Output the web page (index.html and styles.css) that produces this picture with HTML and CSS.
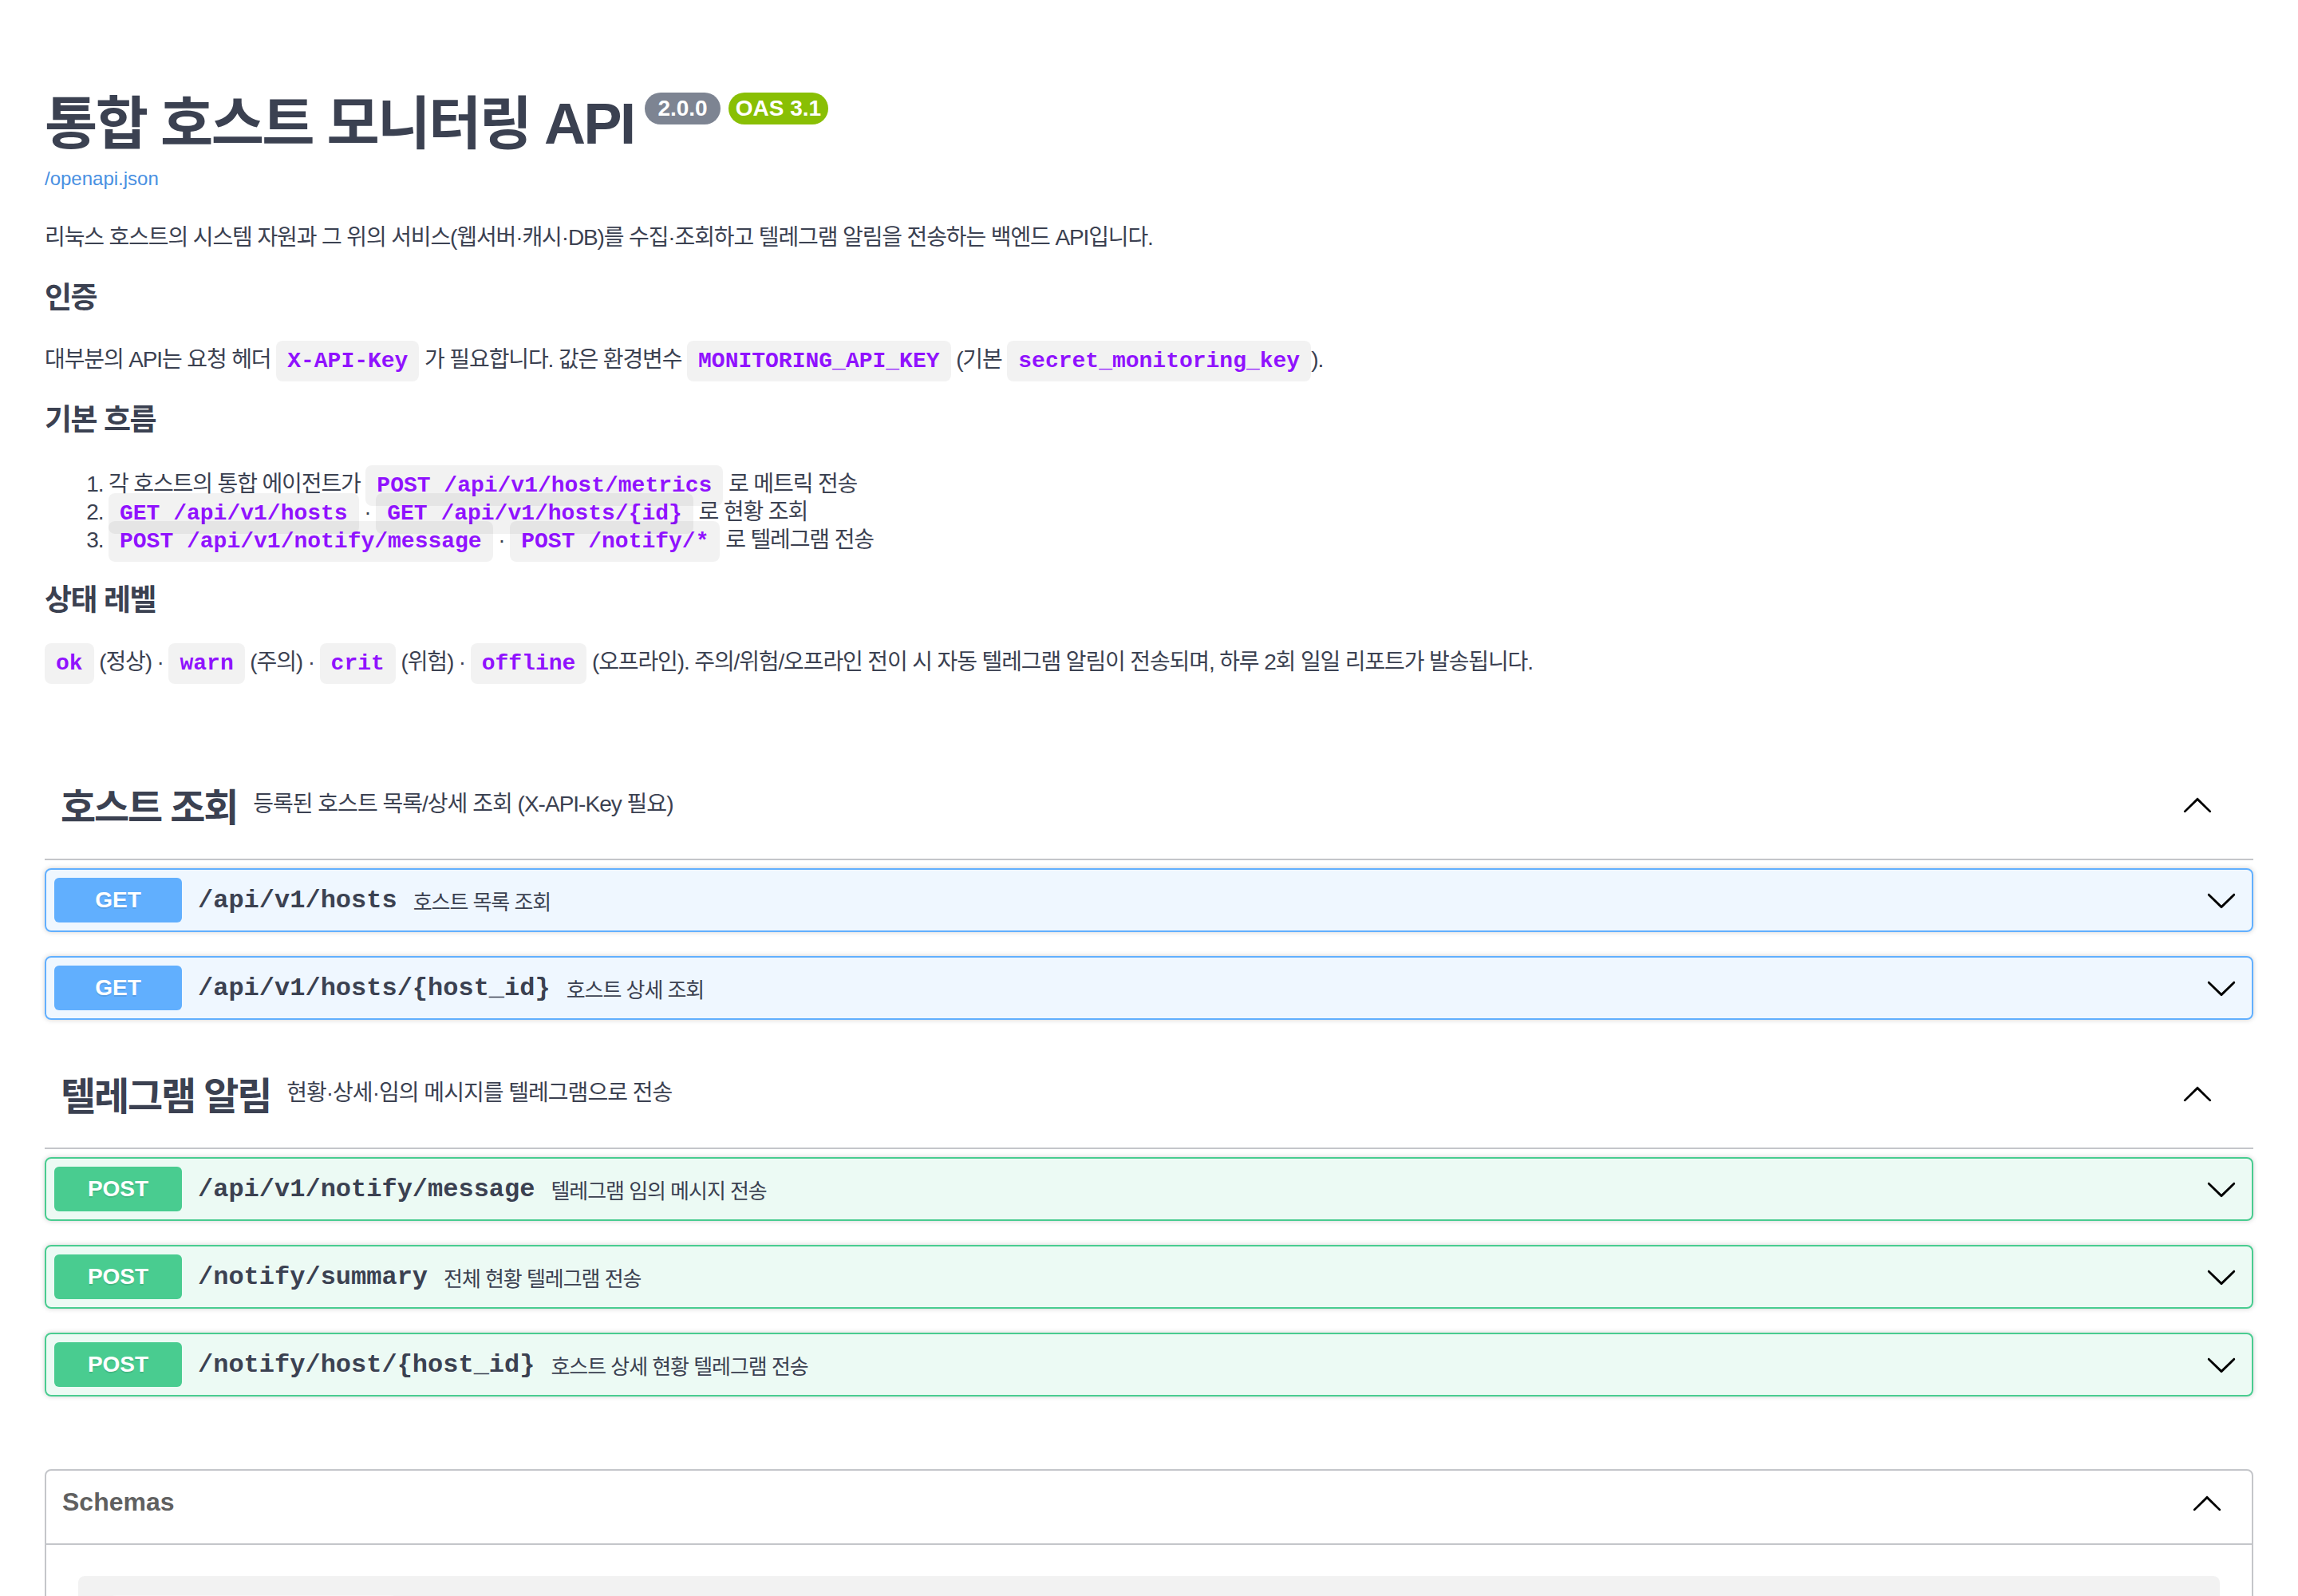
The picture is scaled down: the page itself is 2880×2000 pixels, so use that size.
FILE: index.html
```html
<!DOCTYPE html>
<html lang="ko">
<head>
    <meta charset="UTF-8">
    <meta name="viewport" content="width=device-width, initial-scale=1.0">
    <title>통합 호스트 모니터링 API - Swagger UI</title>
    <link rel="stylesheet" href="styles.css">
</head>
<body>
    <div class="wrapper">
        <div class="info">
            <hgroup class="main">
                <h2 class="title">통합 호스트 모니터링 API<span class="version">2.0.0</span><span class="version stamp">OAS 3.1</span></h2>
                <a class="link" href="#">/openapi.json</a>
            </hgroup>
            <div class="markdown">
                <p>리눅스 호스트의 시스템 자원과 그 위의 서비스(웹서버·캐시·DB)를 수집·조회하고 텔레그램 알림을 전송하는 백엔드 API입니다.</p>
                <h3>인증</h3>
                <p>대부분의 API는 요청 헤더 <code>X-API-Key</code> 가 필요합니다. 값은 환경변수 <code>MONITORING_API_KEY</code> (기본 <code>secret_monitoring_key</code>).</p>
                <h3>기본 흐름</h3>
                <ol>
                    <li>각 호스트의 통합 에이전트가 <code>POST /api/v1/host/metrics</code> 로 메트릭 전송</li>
                    <li><code>GET /api/v1/hosts</code> · <code>GET /api/v1/hosts/{id}</code> 로 현황 조회</li>
                    <li><code>POST /api/v1/notify/message</code> · <code>POST /notify/*</code> 로 텔레그램 전송</li>
                </ol>
                <h3>상태 레벨</h3>
                <p><code>ok</code> (정상) · <code>warn</code> (주의) · <code>crit</code> (위험) · <code>offline</code> (오프라인). 주의/위험/오프라인 전이 시 자동 텔레그램 알림이 전송되며, 하루 2회 일일 리포트가 발송됩니다.</p>
            </div>
        </div>

        <section class="tag-section">
            <h3 class="tag">
                <span class="tag-name">호스트 조회</span>
                <small><p>등록된 호스트 목록/상세 조회 (X-API-Key 필요)</p></small>
                <svg class="arrow" viewBox="0 0 20 20"><path d="M17.418 14.908c.272.268.709.268.979 0s.271-.701 0-.969l-7.908-7.83c-.27-.268-.707-.268-.979 0l-7.908 7.83c-.27.268-.27.701 0 .969.271.268.709.268.979 0L10 7.773l7.418 7.135z"/></svg>
            </h3>
            <div class="opblock get">
                <div class="summary">
                    <span class="method">GET</span>
                    <span class="path">/api/v1/hosts</span>
                    <span class="desc">호스트 목록 조회</span>
                    <svg class="arrow" viewBox="0 0 20 20"><path d="M17.418 6.109c.272-.268.709-.268.979 0s.271.701 0 .969l-7.908 7.83c-.27.268-.707.268-.979 0l-7.908-7.83c-.27-.268-.27-.701 0-.969.271-.268.709-.268.979 0L10 13.25l7.418-7.141z"/></svg>
                </div>
            </div>
            <div class="opblock get">
                <div class="summary">
                    <span class="method">GET</span>
                    <span class="path">/api/v1/hosts/{host_id}</span>
                    <span class="desc">호스트 상세 조회</span>
                    <svg class="arrow" viewBox="0 0 20 20"><path d="M17.418 6.109c.272-.268.709-.268.979 0s.271.701 0 .969l-7.908 7.83c-.27.268-.707.268-.979 0l-7.908-7.83c-.27-.268-.27-.701 0-.969.271-.268.709-.268.979 0L10 13.25l7.418-7.141z"/></svg>
                </div>
            </div>
        </section>

        <section class="tag-section">
            <h3 class="tag">
                <span class="tag-name">텔레그램 알림</span>
                <small><p>현황·상세·임의 메시지를 텔레그램으로 전송</p></small>
                <svg class="arrow" viewBox="0 0 20 20"><path d="M17.418 14.908c.272.268.709.268.979 0s.271-.701 0-.969l-7.908-7.83c-.27-.268-.707-.268-.979 0l-7.908 7.83c-.27.268-.27.701 0 .969.271.268.709.268.979 0L10 7.773l7.418 7.135z"/></svg>
            </h3>
            <div class="opblock post">
                <div class="summary">
                    <span class="method">POST</span>
                    <span class="path">/api/v1/notify/message</span>
                    <span class="desc">텔레그램 임의 메시지 전송</span>
                    <svg class="arrow" viewBox="0 0 20 20"><path d="M17.418 6.109c.272-.268.709-.268.979 0s.271.701 0 .969l-7.908 7.83c-.27.268-.707.268-.979 0l-7.908-7.83c-.27-.268-.27-.701 0-.969.271-.268.709-.268.979 0L10 13.25l7.418-7.141z"/></svg>
                </div>
            </div>
            <div class="opblock post">
                <div class="summary">
                    <span class="method">POST</span>
                    <span class="path">/notify/summary</span>
                    <span class="desc">전체 현황 텔레그램 전송</span>
                    <svg class="arrow" viewBox="0 0 20 20"><path d="M17.418 6.109c.272-.268.709-.268.979 0s.271.701 0 .969l-7.908 7.83c-.27.268-.707.268-.979 0l-7.908-7.83c-.27-.268-.27-.701 0-.969.271-.268.709-.268.979 0L10 13.25l7.418-7.141z"/></svg>
                </div>
            </div>
            <div class="opblock post">
                <div class="summary">
                    <span class="method">POST</span>
                    <span class="path">/notify/host/{host_id}</span>
                    <span class="desc">호스트 상세 현황 텔레그램 전송</span>
                    <svg class="arrow" viewBox="0 0 20 20"><path d="M17.418 6.109c.272-.268.709-.268.979 0s.271.701 0 .969l-7.908 7.83c-.27.268-.707.268-.979 0l-7.908-7.83c-.27-.268-.27-.701 0-.969.271-.268.709-.268.979 0L10 13.25l7.418-7.141z"/></svg>
                </div>
            </div>
        </section>

        <section class="models">
            <h4>
                <span>Schemas</span>
                <svg class="arrow" viewBox="0 0 20 20"><path d="M17.418 14.908c.272.268.709.268.979 0s.271-.701 0-.969l-7.908-7.83c-.27-.268-.707-.268-.979 0l-7.908 7.83c-.27.268-.27.701 0 .969.271.268.709.268.979 0L10 7.773l7.418 7.135z"/></svg>
            </h4>
            <div class="model-container">
                <div class="model-box"></div>
            </div>
        </section>
    </div>
</body>
</html>
```

FILE: styles.css
```css
body {
    margin: 0;
    background: #fff;
    color: #3b4151;
    font-family: "Liberation Sans", "Noto Sans CJK KR", sans-serif;
    font-feature-settings: "palt";
}
.wrapper {
    padding: 16px 56px 0;
}
.info {
    margin: 100px 0 94px;
}
.main {
    margin: 0;
}
.title {
    margin: 0;
    font-size: 72px;
    line-height: 78px;
    font-weight: 700;
    letter-spacing: -0.035em;
}
.version {
    display: inline-block;
    vertical-align: top;
    margin-left: 14px;
    padding: 4px 16px;
    border-radius: 40px;
    background: #7d8492;
    color: #fff;
    font-size: 28px;
    line-height: 32px;
    letter-spacing: 0;
}
.version.stamp {
    margin-left: 10px;
    padding: 4px 9px;
    background: #89bf04;
}
.link {
    display: block;
    margin-top: 15px;
    color: #4990e2;
    font-size: 24px;
    line-height: 30px;
    text-decoration: none;
}
.markdown {
    padding-top: 4px;
}
.markdown p, .markdown li {
    font-size: 28px;
    line-height: 35px;
    letter-spacing: -0.04em;
}
.markdown p {
    margin: 37px 0;
}
.markdown h3 {
    margin: 37px 0;
    font-size: 37px;
    line-height: 44px;
    letter-spacing: -0.04em;
}
.markdown ol {
    margin: 40px 0 37px;
    padding-left: 80px;
}
.markdown code {
    padding: 10px 14px;
    border-radius: 8px;
    background: rgba(0, 0, 0, 0.05);
    color: #9012fe;
    font-family: "Liberation Mono", "Noto Sans CJK KR", monospace;
    font-size: 28px;
    line-height: 1;
    font-weight: 700;
    letter-spacing: 0;
}

/* tags */
.tag-section .opblock:last-child {
    margin-bottom: 25px;
}
.tag {
    display: flex;
    align-items: center;
    margin: 0 0 10px;
    padding: 19px 40px 20px 20px;
    border-bottom: 2px solid rgba(59, 65, 81, 0.3);
    font-size: 48px;
    font-weight: 700;
    letter-spacing: -0.045em;
}
.tag small {
    flex: 1;
    padding: 0 20px;
    font-size: 28px;
    font-weight: 400;
    letter-spacing: -0.035em;
}
.tag small p {
    margin: 28px 0;
    line-height: 40px;
}
.tag .arrow {
    width: 40px;
    height: 40px;
    margin-right: 10px;
}
.arrow {
    fill: #000;
    flex-shrink: 0;
}

/* operations */
.opblock {
    margin: 0 0 30px;
    border: 2px solid #000;
    border-radius: 8px;
    box-shadow: 0 0 6px rgba(0, 0, 0, 0.19);
}
.opblock.get {
    background: rgba(97, 175, 254, 0.1);
    border-color: #61affe;
}
.opblock.post {
    background: rgba(73, 204, 144, 0.1);
    border-color: #49cc90;
}
.summary {
    display: flex;
    align-items: center;
    padding: 10px;
}
.method {
    min-width: 160px;
    padding: 12px 0;
    border-radius: 6px;
    color: #fff;
    font-size: 28px;
    line-height: 32px;
    font-weight: 700;
    text-align: center;
    text-shadow: 0 2px 0 rgba(0, 0, 0, 0.1);
}
.get .method {
    background: #61affe;
}
.post .method {
    background: #49cc90;
}
.path {
    padding: 0 20px;
    font-family: "Liberation Mono", monospace;
    font-size: 32px;
    font-weight: 700;
}
.desc {
    flex: 1;
    font-size: 26px;
    letter-spacing: -0.04em;
}
.summary .arrow {
    width: 40px;
    height: 40px;
    margin-right: 8px;
}

/* schemas */
.models {
    margin: 91px 0 60px;
    padding-bottom: 40px;
    border: 2px solid rgba(59, 65, 81, 0.3);
    border-radius: 8px;
}
.models h4 {
    display: flex;
    align-items: center;
    justify-content: space-between;
    margin: 0;
    padding: 14px 36px 26px 20px;
    border-bottom: 2px solid rgba(59, 65, 81, 0.3);
    color: #606060;
    font-size: 32px;
    line-height: 51px;
}
.models h4 .arrow {
    width: 40px;
    height: 40px;
}
.model-container {
    margin: 39px 40px 30px;
    padding: 24px 39px;
    border-radius: 8px;
    background: rgba(0, 0, 0, 0.05);
}
.model-box {
    width: 361px;
    height: 72px;
    border-radius: 8px;
    background: rgba(255, 255, 255, 0.3);
}
```
